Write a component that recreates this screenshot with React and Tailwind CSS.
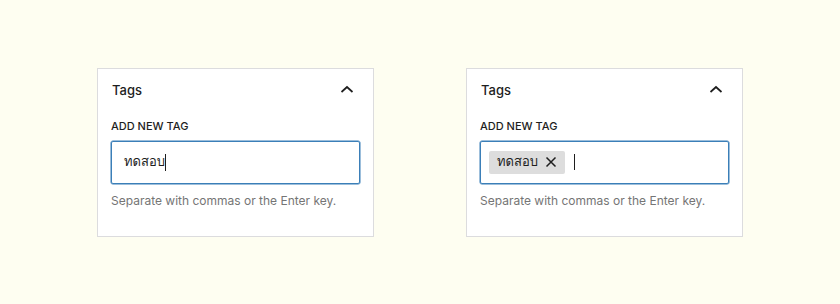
import React from 'react';

const font = { fontFamily: 'Inter, "Noto Sans", sans-serif' };
const thai = { fontFamily: 'Loma, Garuda, "Noto Sans Thai Looped", "Noto Sans Thai", Inter, sans-serif' };

function ChevronUp() {
  return (
    <svg viewBox="0 0 24 24" className="h-6 w-6" fill="none">
      <path d="M6.5 13 12 8l5.5 5" stroke="#1e1e1e" strokeWidth="1.7" />
    </svg>
  );
}

function CloseX() {
  return (
    <svg viewBox="0 0 12 12" className="h-[12px] w-[12px]" fill="none">
      <path d="M1.5 1.5l9 9M10.5 1.5l-9 9" stroke="#1e1e1e" strokeWidth="1.5" />
    </svg>
  );
}

function TagsPanel({ children }) {
  return (
    <div className="w-[277px] border border-[#dcdcde] bg-white">
      <div className="flex h-[45px] items-center justify-between pl-[14px] pr-[14px]">
        <span className="text-[13px] font-medium text-[#1e1e1e]">Tags</span>
        <ChevronUp />
      </div>
      <div className="px-[13px] pb-[26px]">
        <div className="mt-[4px] h-[16px] text-[11px] font-medium uppercase leading-[16px] text-[#1e1e1e]">
          Add new tag
        </div>
        <div className="mt-[7px] flex h-[43px] items-center rounded-[2px] border border-[#3b7fb8] shadow-[0_0_0_0.5px_#3b7fb8]">
          {children}
        </div>
        <p className="mt-[8px] text-[12px] leading-[18px] text-[#757575]">
          Separate with commas or the Enter key.
        </p>
      </div>
    </div>
  );
}

export default function App() {
  return (
    <div className="flex h-[304px] w-[840px] items-center justify-center gap-[92px] bg-[#fefef1]" style={font}>
      <TagsPanel>
        <span className="pl-[12px] text-[13px] font-medium text-[#1e1e1e]" style={thai}>ทดสอบ</span>
        <span className="h-[17px] w-[1px] bg-[#1e1e1e]" />
      </TagsPanel>
      <TagsPanel>
        <div className="ml-[8px] flex h-[23px] items-center gap-[7px] rounded-[2px] bg-[#dddddd] pl-[8px] pr-[8px]">
          <span className="text-[13px] font-medium text-[#1e1e1e]" style={thai}>ทดสอบ</span>
          <CloseX />
        </div>
        <span className="ml-[9px] h-[16px] w-[1px] bg-[#1e1e1e]" />
      </TagsPanel>
    </div>
  );
}
